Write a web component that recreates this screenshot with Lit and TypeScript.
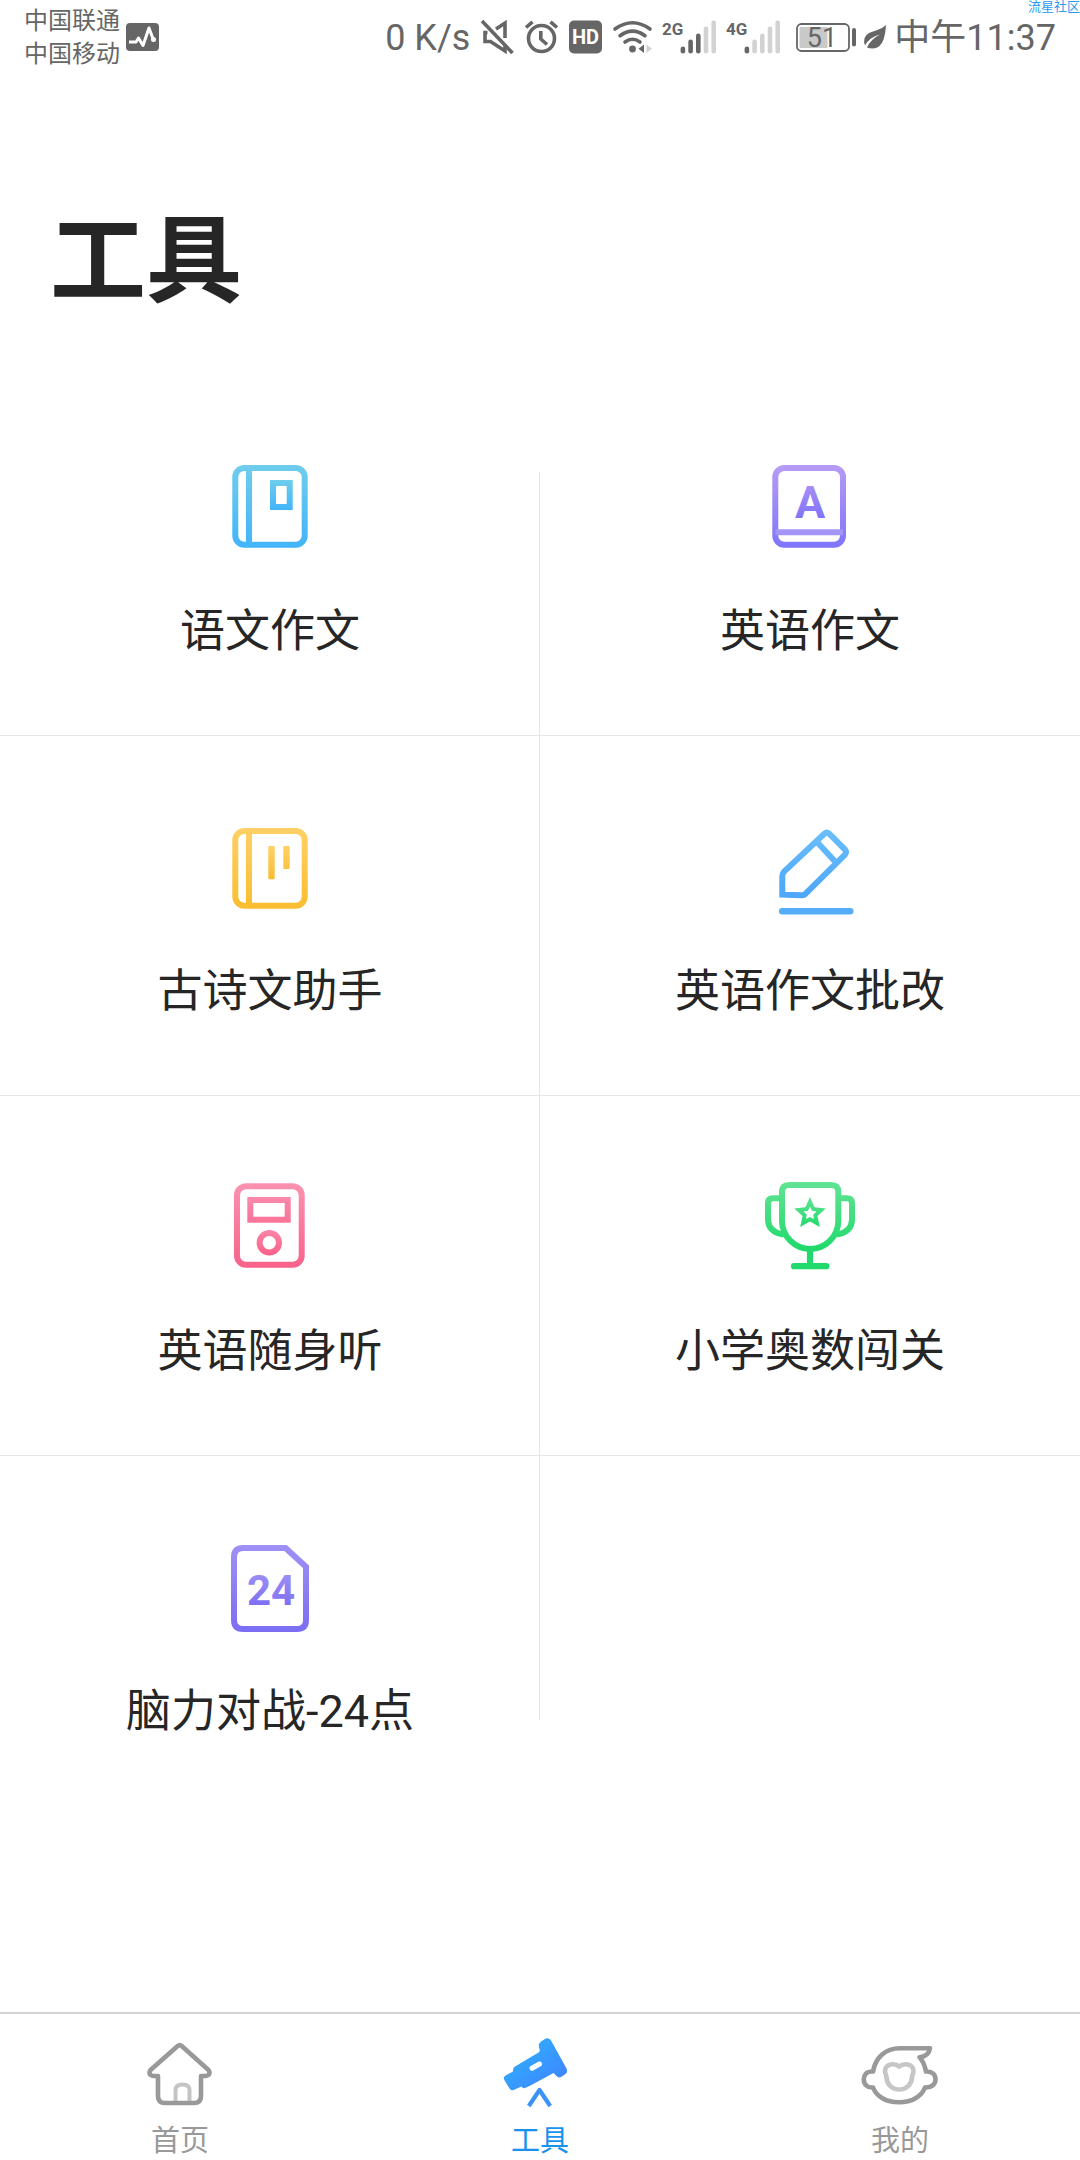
import { LitElement, html, css, svg, nothing } from "lit";
import { customElement, state } from "lit/decorators.js";
import { classMap } from "lit/directives/class-map.js";

const grad = (id: string, from: string, to: string, y1: number, y2: number) => svg`
  <linearGradient id=${id} gradientUnits="userSpaceOnUse" x1="0" y1=${y1} x2="0" y2=${y2}>
    <stop offset="0" stop-color=${from}></stop>
    <stop offset="1" stop-color=${to}></stop>
  </linearGradient>`;

/** Path of a five-pointed star around (cx, cy). */
const star = (cx: number, cy: number, outer: number, inner: number) =>
  Array.from({ length: 10 }, (_, i) => {
    const r = i % 2 ? inner : outer;
    const a = (Math.PI / 5) * i - Math.PI / 2;
    return `${i ? "L" : "M"}${(cx + r * Math.cos(a)).toFixed(2)} ${(cy + r * Math.sin(a)).toFixed(2)}`;
  }).join("") + "Z";

const chineseBook = svg`
  <defs>${grad("cb", "#6fcdec", "#42b4fa", 13, 96)}${grad("cb2", "#6fcdec", "#42b4fa", 28, 58)}</defs>
  <g fill="none" stroke="url(#cb)" stroke-width="6">
    <rect x="19.3" y="16" width="69.4" height="76.7" rx="9"></rect>
    <path d="M33 16V92.5"></path>
    <rect x="57" y="31" width="16.7" height="24" stroke="url(#cb2)"></rect>
  </g>`;

const englishBook = svg`
  <defs>${grad("eb", "#b79cf5", "#7f74fb", 13, 96)}${grad("eb2", "#a98ff4", "#7f74fb", 33, 66)}</defs>
  <g fill="none" stroke="url(#eb)" stroke-width="6">
    <rect x="19.3" y="16" width="67.7" height="76.7" rx="9"></rect>
    <path d="M19.3 80.3H87.01" stroke="#a394f6"></path>
  </g>
  <text class="letter" x="54" y="65.7" fill="url(#eb2)">A</text>`;

const poemBook = svg`
  <defs>${grad("pb", "#fed067", "#fabd2f", 16, 97)}${grad("pb2", "#fed067", "#fabd2f", 34, 67)}</defs>
  <g fill="none" stroke="url(#pb)" stroke-width="6">
    <rect x="19.3" y="19" width="69.4" height="74.7" rx="9"></rect>
    <path d="M33 19V93.5"></path>
  </g>
  <rect x="52.3" y="34" width="6.4" height="33.3" rx="1" fill="url(#pb2)"></rect>
  <rect x="67.3" y="34" width="6.4" height="23" rx="1" fill="url(#pb2)"></rect>`;

const pencil = svg`
  <defs>${grad("pe", "#6bbffd", "#4da6f8", 16, 86)}</defs>
  <g fill="none" stroke="url(#pe)" stroke-width="6">
    <path d="M68.4 21.8L28.3 59.4Q26.3 61.4 26.3 64V82.7L46 83.2Q48 83.2 49.6 81.7L89 42.6Q91 40.2 89 37.6L73.2 21.7Q70.8 19.6 68.4 21.8Z"></path>
    <path d="M61 30L78.6 49"></path>
    <path d="M26.2 99.3H94.2" stroke="#55adf9" stroke-width="6.6" stroke-linecap="round"></path>
  </g>`;

const player = svg`
  <defs>${grad("pl", "#fb92b0", "#f9618a", 11, 96)}${grad("pl2", "#fa89aa", "#f97399", 25, 51)}${grad("pl3", "#fa86a7", "#f9618a", 58, 83)}</defs>
  <g fill="none" stroke="url(#pl)" stroke-width="6">
    <rect x="21" y="14.3" width="64.7" height="78.4" rx="9"></rect>
    <rect x="34.3" y="28" width="37.4" height="19.7" stroke="url(#pl2)"></rect>
    <circle cx="53.3" cy="70.7" r="9.7" stroke="url(#pl3)"></circle>
  </g>`;

const trophy = svg`
  <defs>${grad("tr", "#62e394", "#1cd968", 10, 82)}${grad("tr2", "#62e394", "#1cd968", 24, 58)}</defs>
  <g fill="none" stroke="url(#tr)" stroke-width="6">
    <path d="M33 13H75.3Q82.3 13 82.3 20V48.8A28.15 28.15 0 0 1 26 48.8V20Q26 13 33 13Z"></path>
    <path d="M26 26.3H17Q12 26.3 12 31.3V47Q12 60 27.5 62.5"></path>
    <path d="M82.3 26.3H91Q96 26.3 96 31.3V47Q96 60 80.8 62.5"></path>
  </g>
  <path d="M54 78V93M38 94.2H70.4" fill="none" stroke="#22d96c" stroke-width="6.2" stroke-linecap="round"></path>
  <path d=${star(54, 41.6, 16.6, 7.8) + star(54, 41.6, 6.8, 3.4)} fill="url(#tr2)" fill-rule="evenodd"></path>`;

const card24 = svg`
  <defs>${grad("cd", "#9f90f5", "#7b6ef3", 13, 100)}${grad("cd2", "#a092f5", "#7b6ef3", 38, 76)}</defs>
  <path d="M27 16H69.6L90 34.8V88Q90 97 81 97H27Q18 97 18 88V25Q18 16 27 16Z" fill="none" stroke="url(#cd)" stroke-width="6"></path>
  <text class="digits" x="55" y="73" fill="url(#cd2)">24</text>`;

const homeIcon = svg`
  <g fill="none">
    <path d="M40.500 69V56Q40.500 50.500 47.500 50.500Q54.500 50.500 54.500 56V69" stroke="#c4c4c4" stroke-width="4"></path>
    <path d="M42.700 12L15.500 36Q12.500 41 18.500 42H23V62Q23 69 30 69H59Q66 69 66 62V42H70.500Q76.500 41 73.500 36L46.700 12Q44.700 10.200 42.700 12Z" stroke="#999" stroke-width="4.600" stroke-linejoin="round"></path>
  </g>`;

const telescopeIcon = svg`
  <defs>
    <linearGradient id="ts" x1="0" y1="0" x2="1" y2="1">
      <stop offset="0.200" stop-color="#2fadff"></stop><stop offset="0.850" stop-color="#3f87fd"></stop>
    </linearGradient>
  </defs>
  <path d="M49.500 5.200Q53.500 3 56 6.500L71.500 34.500Q73 38 70.500 40L66.500 42.800Q63.500 44.500 61.500 42L58.500 39L35.500 51.500L30 54Q28 54.700 26.500 52.500L18.500 56Q16 57 14.500 54.500L9.300 46Q8 43 10.500 41.500L18 37.500Q17.500 34 20 32.500L43.500 18.500Q45.500 17 44.500 15Q42.500 10.500 46 7.500Z" fill="url(#ts)"></path>
  <path d="M37 34.200L44.500 30" stroke="#fff" stroke-width="5" stroke-linecap="round"></path>
  <path d="M33.800 72L44.500 56L55.200 72" fill="none" stroke="#3c93f6" stroke-width="4.200" stroke-linejoin="round"></path>`;

const faceIcon = svg`
  <g fill="none" stroke-linejoin="round">
    <path d="M44.200 32.500C40 28.700 30 29.500 30 37.500C30 39.500 31.500 41 31.500 43.500C32 50.500 37 55.500 44.200 55.500C51.500 55.500 56.500 50.500 57 43.500C57 41 58.500 39.500 58.500 37.500C58.500 29.500 48.500 28.700 44.200 32.500Z" stroke="#c6c6c6" stroke-width="4.600"></path>
    <path d="M75 14.200H45C30 14.200 20.500 24 18 37.500C11.500 37 8.800 41 8.800 45.500C8.800 50 12 54 18 53.500C21.500 62.500 31 68.300 44 68.300C57 68.300 66.500 62.500 70 53.500C76.500 54 80.500 50 80.500 45.500C80.500 41 77.500 37 71 37.500C70 32 68 27 64.500 23.200C70.500 23 74 20 75 14.200Z" stroke="#999" stroke-width="4.600"></path>
  </g>`;

const tools = [
  { name: "语文作文", icon: chineseBook },
  { name: "英语作文", icon: englishBook },
  { name: "古诗文助手", icon: poemBook },
  { name: "英语作文批改", icon: pencil },
  { name: "英语随身听", icon: player },
  { name: "小学奥数闯关", icon: trophy },
  { name: "脑力对战-24点", icon: card24 },
];

const tabs = [
  { id: "home", name: "首页", icon: homeIcon },
  { id: "tools", name: "工具", icon: telescopeIcon },
  { id: "mine", name: "我的", icon: faceIcon },
];

@customElement("status-bar")
export class StatusBar extends LitElement {
  static styles = css`
    :host {
      display: flex;
      align-items: center;
      justify-content: space-between;
      height: 74px;
      padding: 0 24px;
      color: #666;
      position: relative;
      font-family: Roboto, "Noto Sans CJK SC", sans-serif;
      white-space: nowrap;
    }
    .carriers, .system, .power {
      display: flex;
      align-items: center;
    }
    .carriers {
      gap: 6px;
      font-size: 24px;
      line-height: 33px;
    }
    .system {
      gap: 11px;
      font-size: 36px;
      line-height: 44px;
    }
    .power {
      gap: 8px;
    }
    .text {
      padding-top: 2px;
    }
    svg {
      display: block;
      flex: none;
      overflow: visible;
    }
    .net, .hd, .charge {
      font-family: Roboto, sans-serif;
    }
    .net {
      font-weight: 700;
      font-size: 17px;
    }
    .hd {
      font-weight: 700;
      font-size: 20px;
      text-anchor: middle;
    }
    .charge {
      font-size: 27px;
      text-anchor: middle;
    }
    .mark {
      position: absolute;
      top: 0;
      right: 0;
      color: #2a9bf0;
      font-size: 13px;
      line-height: 13px;
    }
  `;

  private signal(net: string, strength: number) {
    const heights = [7, 14, 20, 27, 33];
    return html`<svg width="53" height="34" viewBox="0 0 53 34" aria-hidden="true">
      <text class="net" x="-1" y="15" fill="#666">${net}</text>
      ${heights.map(
        (h, i) => svg`<rect x=${17.6 + i * 7.7} y=${33.5 - h} width="4.6" height=${h} rx="2.3"
          fill=${i < strength ? "#666" : "#d2d2d2"}></rect>`
      )}
    </svg>`;
  }

  render() {
    return html`
      <div class="carriers">
        <div class="text">
          <div>中国联通</div>
          <div>中国移动</div>
        </div>
        <svg width="33" height="28" viewBox="0 0 33 28" aria-hidden="true">
          <rect width="33" height="28" rx="4" fill="#666"></rect>
          <path d="M3 19H10L12.500 15L17 22.500L23 5L27.500 17" fill="none" stroke="#fff" stroke-width="3" stroke-linejoin="round"></path>
          <circle cx="27.500" cy="16.500" r="2.500" fill="#fff"></circle>
        </svg>
      </div>
      <div class="system">
        <span class="text">0 K/s</span>
        <svg width="33" height="34" viewBox="0 0 33 34" aria-hidden="true">
          <g fill="none" stroke="#666" stroke-width="3.600">
            <path d="M1 1L31.500 33"></path>
            <path d="M15 9L24 3V18"></path>
            <path d="M6.500 12.500H4V21.500H9.500L24 31V25"></path>
          </g>
        </svg>
        <svg width="33" height="34" viewBox="0 0 33 34" aria-hidden="true">
          <g fill="none" stroke="#666" stroke-width="3.600">
            <circle cx="16.500" cy="18.500" r="13"></circle>
            <path d="M15.800 11V19L22 24.500"></path>
            <path d="M1 7.500L7.500 1.800M32 7.500L25.500 1.800"></path>
          </g>
        </svg>
        <svg width="33" height="34" viewBox="0 0 33 34" aria-hidden="true">
          <rect width="33" height="33" y="0.500" rx="5" fill="#666"></rect>
          <text class="hd" x="16.500" y="24" fill="#fff">HD</text>
        </svg>
        <svg width="39" height="34" viewBox="0 0 39 34" aria-hidden="true">
          <g fill="none" stroke="#666" stroke-width="3.600" stroke-linecap="round">
            <path d="M2 9Q19.500 -3.500 37 9"></path>
            <path d="M7 15.800Q19.500 6.500 32 15.800"></path>
            <path d="M12 22Q19.500 16.500 27 22"></path>
          </g>
          <circle cx="19.500" cy="29" r="3.400" fill="#666"></circle>
          <path d="M31 24.500V33L25.500 28.700Z" fill="#666"></path>
          <path d="M33.500 24.500V33L39 28.700Z" fill="#d2d2d2"></path>
        </svg>
        ${this.signal("2G", 3)} ${this.signal("4G", 1)}
        <div class="power">
          <svg width="65" height="34" viewBox="0 0 65 34" aria-hidden="true">
            <rect x="6" y="4" width="52" height="27" rx="4.500" fill="none" stroke="#666" stroke-width="1.800"></rect>
            <rect x="8.500" y="7" width="28" height="21" rx="1" fill="#c9c9c9"></rect>
            <rect x="61" y="8" width="4" height="18.500" rx="2" fill="#666"></rect>
            <text class="charge" x="31" y="27" fill="#666">51</text>
          </svg>
          <svg width="22" height="34" viewBox="0 0 22 34" aria-hidden="true">
            <path d="M22 5Q21 22 15 26.500Q10 30 3 27.500Q7 19 16 14.500Q5 17.500 1 25.500Q-2 17 5 13Q8 11.500 12 10.500Q18 9 22 5Z" fill="#666"></path>
          </svg>
          <span class="text">中午11:37</span>
        </div>
      </div>
      <span class="mark">流星社区</span>
    `;
  }
}

@customElement("app-root")
export class AppRoot extends LitElement {
  static styles = css`
    :host {
      display: flex;
      flex-direction: column;
      min-height: 100vh;
      background: #fff;
      color: #262626;
      font-family: Roboto, "Noto Sans CJK SC", sans-serif;
    }
    main {
      flex: 1;
    }
    .title {
      margin: 0;
      padding: 139px 50px 67px;
      font-size: 96px;
      line-height: 96px;
      font-weight: 700;
    }
    .grid {
      display: grid;
      grid-template-columns: 1fr 1fr;
      grid-auto-rows: 360px;
      background: linear-gradient(#e6e6e6, #e6e6e6) calc(50% - 1px) 50% / 1px calc(100% - 192px) no-repeat;
    }
    .tool {
      display: flex;
      flex-direction: column;
      align-items: center;
      gap: 40px;
      padding: 76px 0 0;
      border: 0;
      border-bottom: 1px solid #e6e6e6;
      background: none;
      color: inherit;
      font: inherit;
      font-size: 45px;
      line-height: 64px;
    }
    .tool.last {
      border-bottom: 0;
    }
    .icon {
      display: block;
      width: 108px;
      height: 108px;
      flex: none;
    }
    .letter {
      font: 700 45px Roboto, sans-serif;
      text-anchor: middle;
    }
    .digits {
      font: 700 42px Roboto, sans-serif;
      text-anchor: middle;
    }
    .tabs {
      display: grid;
      grid-template-columns: repeat(3, 1fr);
      border-top: 2px solid #d2d2d2;
    }
    .tab {
      display: flex;
      flex-direction: column;
      align-items: center;
      gap: 10px;
      padding: 20px 0 0;
      color: #999;
      font-size: 29px;
      line-height: 38px;
      text-decoration: none;
    }
    .tab.active {
      color: #1792ef;
    }
    .tab-icon {
      display: block;
      width: 90px;
      height: 78px;
    }
  `;

  @state() private active = "tools";

  render() {
    const lastRow = tools.length - (tools.length % 2 || 2);
    return html`
      <status-bar></status-bar>
      <main>
        <h1 class="title">工具</h1>
        <div class="grid">
          ${tools.map(
            (t, i) => html`
              <button type="button" class=${classMap({ tool: true, last: i >= lastRow })}>
                <svg class="icon" viewBox="0 0 108 108" aria-hidden="true">${t.icon}</svg>
                <span>${t.name}</span>
              </button>
            `
          )}
        </div>
      </main>
      <nav class="tabs">
        ${tabs.map(
          (t) => html`
            <a
              href="#${t.id}"
              class=${classMap({ tab: true, active: this.active === t.id })}
              aria-current=${this.active === t.id ? "page" : nothing}
              @click=${() => (this.active = t.id)}
            >
              <svg class="tab-icon" viewBox="0 0 90 78" aria-hidden="true">${t.icon}</svg>
              <span>${t.name}</span>
            </a>
          `
        )}
      </nav>
    `;
  }
}
